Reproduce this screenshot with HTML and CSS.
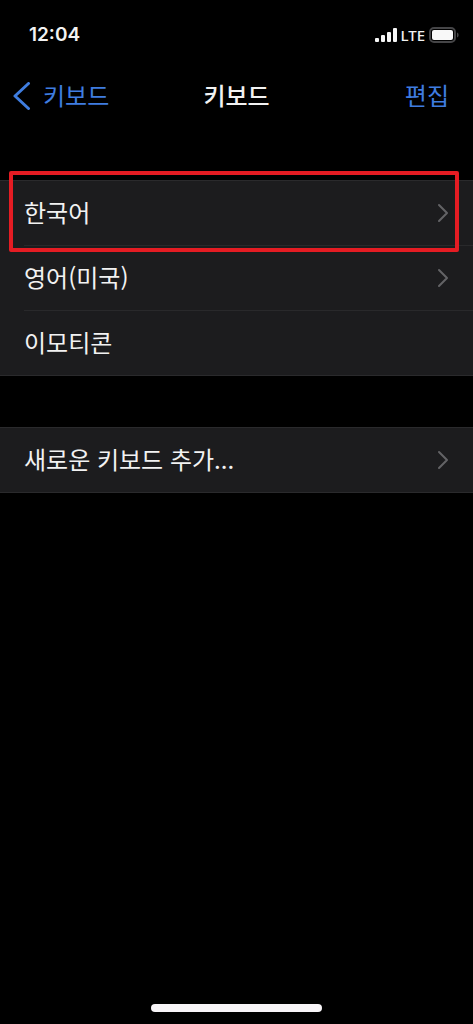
FILE: index.html
```html
<!DOCTYPE html>
<html lang="ko">
<head>
  <meta charset="UTF-8">
  <meta name="viewport" content="width=device-width, initial-scale=1.0">
  <title>키보드</title>
  <link rel="stylesheet" href="styles.css">
</head>
<body>
  <div class="status-bar">
    <span class="time">12:04</span>
    <div class="status-right">
      <svg class="signal" width="22" height="14" viewBox="0 0 22 14" fill="#f5f5f5">
        <rect x="0" y="10" width="4" height="4" rx="1"/>
        <rect x="6" y="7" width="4" height="7" rx="1"/>
        <rect x="12" y="4" width="4" height="10" rx="1"/>
        <rect x="18" y="0" width="4" height="14" rx="1"/>
      </svg>
      <span class="network">LTE</span>
      <svg class="battery" width="30" height="16" viewBox="0 0 30 16">
        <rect x="1" y="1" width="25" height="14" rx="4" fill="none" stroke="#454547" stroke-width="2"/>
        <rect x="3" y="3" width="21" height="10" rx="2" fill="#f8f8f8"/>
        <path d="M28 5.500c1.200.4 1.600 1.400 1.600 2.500s-.4 2.100-1.600 2.500z" fill="#454547"/>
      </svg>
    </div>
  </div>

  <header class="nav-bar">
    <a class="back" href="#">
      <svg width="18" height="28" viewBox="0 0 18 28" fill="none" stroke="#3f7de0" stroke-width="3" stroke-linecap="round" stroke-linejoin="round">
        <path d="M15.500 1.500L2 14l13.500 12.500"/>
      </svg>
      <span class="label">키보드</span>
    </a>
    <h1 class="title label">키보드</h1>
    <button class="edit label" type="button">편집</button>
  </header>

  <main>
    <ul class="list">
      <li class="highlight">
        <a class="row" href="#">
          <span class="label">한국어</span>
          <svg class="chevron" width="12" height="20" viewBox="0 0 12 20"><path d="M2 2l8 8-8 8"/></svg>
        </a>
      </li>
      <li>
        <a class="row" href="#">
          <span class="label">영어(미국)</span>
          <svg class="chevron" width="12" height="20" viewBox="0 0 12 20"><path d="M2 2l8 8-8 8"/></svg>
        </a>
      </li>
      <li>
        <div class="row"><span class="label">이모티콘</span></div>
      </li>
    </ul>

    <ul class="list">
      <li>
        <a class="row" href="#">
          <span class="label">새로운 키보드 추가...</span>
          <svg class="chevron" width="12" height="20" viewBox="0 0 12 20"><path d="M2 2l8 8-8 8"/></svg>
        </a>
      </li>
    </ul>
  </main>

  <div class="home-indicator"></div>
</body>
</html>
```

FILE: styles.css
```css
* {
  box-sizing: border-box;
}

body {
  margin: 0;
  min-height: 100vh;
  display: flex;
  flex-direction: column;
  background-color: #000;
  color: #f2f2f2;
  font-family: "Noto Sans CJK KR", sans-serif;
  font-size: 24px;
  font-weight: 400;
  line-height: 32px;
}

a {
  color: inherit;
  text-decoration: none;
}

/* status bar */
.status-bar {
  display: flex;
  justify-content: space-between;
  align-items: center;
  height: 68px;
  padding: 2px 14px 0 29px;
  font-family: Inter, sans-serif;
}

.time {
  font-size: 19px;
  font-weight: 600;
}

.status-right {
  display: flex;
  align-items: center;
  gap: 4px;
}

.network {
  font-family: "Noto Sans", sans-serif;
  font-size: 15px;
  font-weight: 500;
}

/* navigation bar */
.nav-bar {
  display: grid;
  grid-template-columns: 1fr auto 1fr;
  align-items: center;
  height: 56px;
  padding: 0 13px;
}

.back {
  display: flex;
  align-items: center;
  gap: 12px;
  color: #3f7de0;
}

/* hangul sits low in its line box */
.label {
  padding: 0 0 2px;
}

.title {
  margin: 0;
  font-size: 24px;
  font-weight: 500;
}

.edit {
  justify-self: end;
  margin-right: 11px;
  border: none;
  background: none;
  color: #3f7de0;
  font: inherit;
}

/* lists */
main {
  flex: 1;
  padding-top: 56px;
}

.list {
  margin: 0 0 51px;
  padding: 0;
  list-style: none;
  background-color: #1c1c1e;
  border-top: 1px solid #2a2a2c;
  border-bottom: 1px solid #2a2a2c;
}

.list li {
  position: relative;
  padding-left: 24px;
}

.list li + li {
  margin-top: 1px;
}

.list li + li::before {
  content: "";
  position: absolute;
  top: -1px;
  left: 24px;
  right: 0;
  height: 1px;
  background-color: #29292b;
}

.row {
  display: flex;
  justify-content: space-between;
  align-items: center;
  height: 64px;
  padding-right: 24px;
}

.chevron {
  fill: none;
  stroke: #636366;
  stroke-width: 2;
  stroke-linecap: round;
  stroke-linejoin: round;
}

/* red frame over the selected keyboard */
.highlight::after {
  content: "";
  position: absolute;
  top: -10px;
  bottom: -7px;
  left: 9px;
  right: 14px;
  z-index: 1;
  border: 4px solid #e51c23;
  border-radius: 2px;
  pointer-events: none;
}

.home-indicator {
  width: 36%;
  height: 8px;
  margin: 0 auto 12px;
  border-radius: 4px;
  background-color: #f8f5f8;
}
```
